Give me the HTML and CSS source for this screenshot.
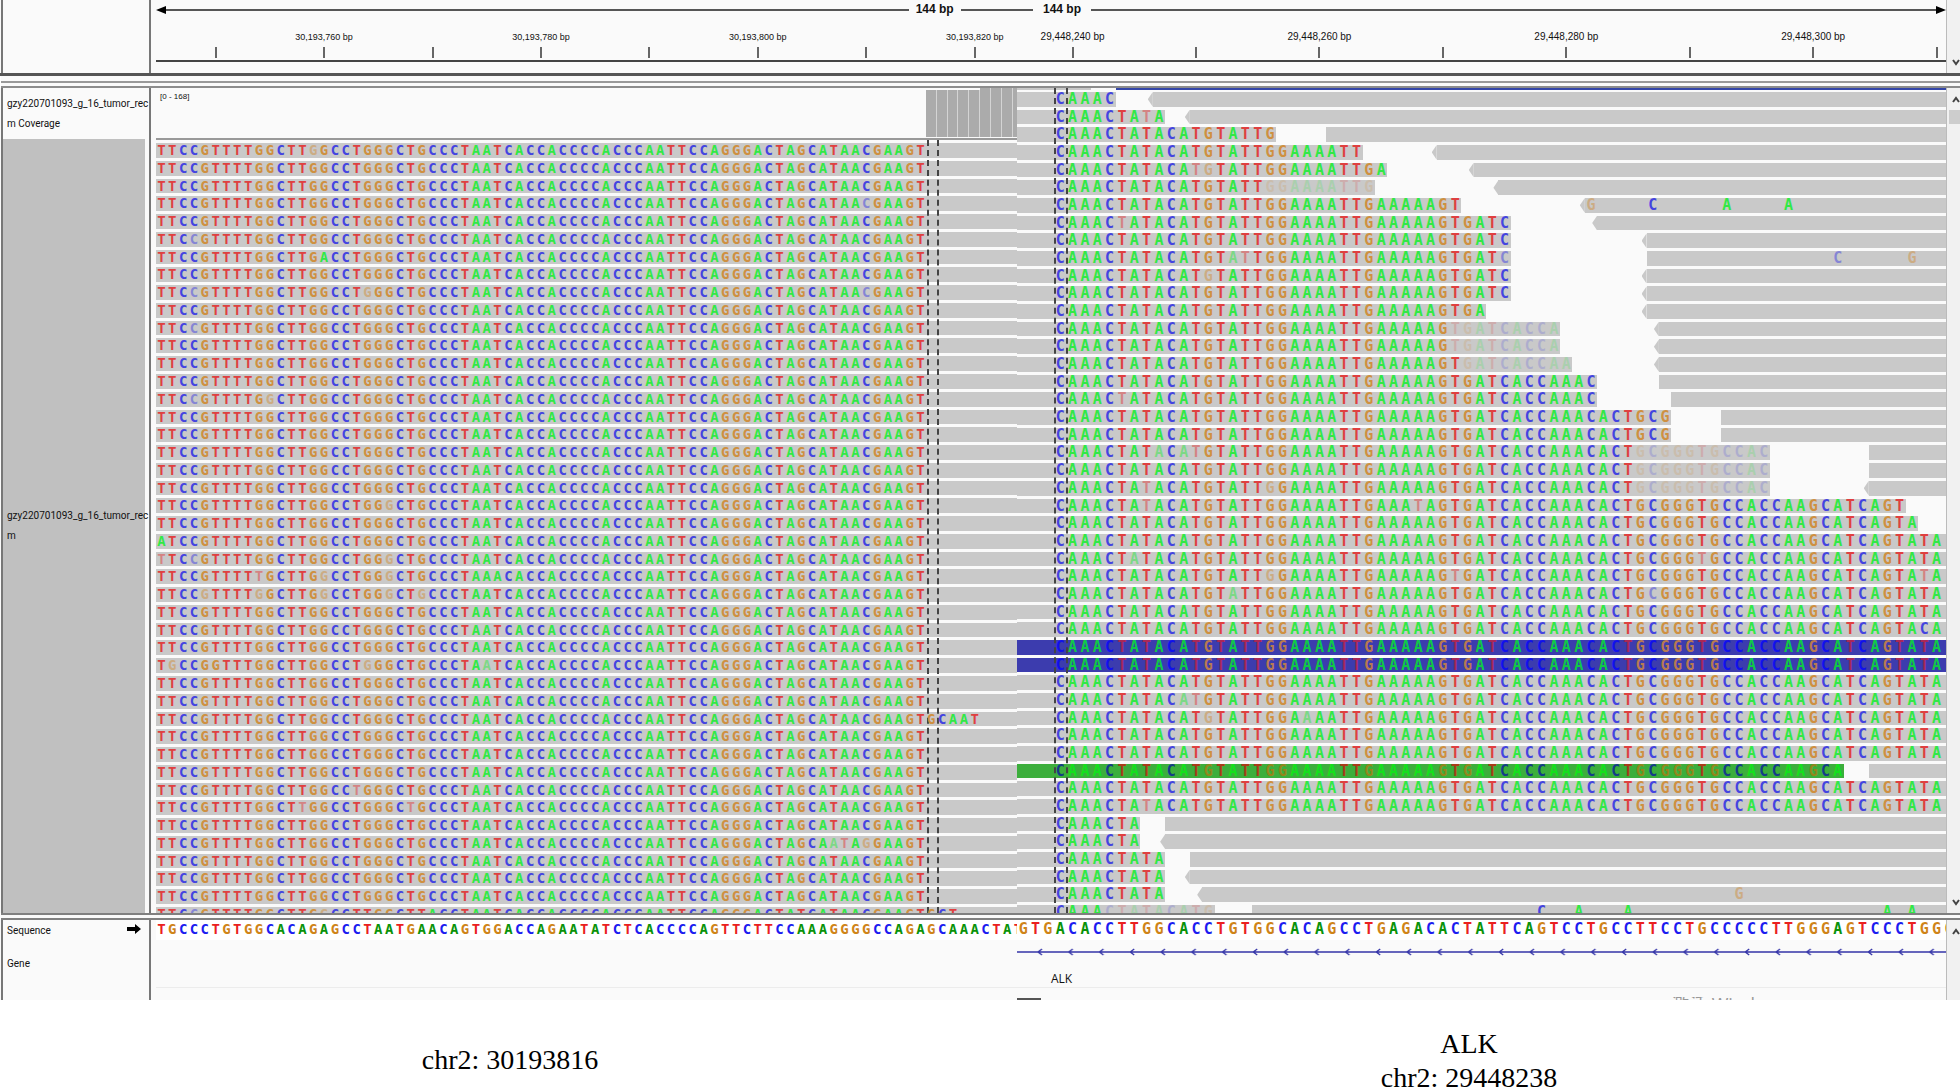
FILE: index.html
```html
<!DOCTYPE html>
<html lang="en">
<head>
<meta charset="utf-8">
<title>EML4–ALK read alignments</title>
<link rel="stylesheet" href="styles.css">
</head>
<body>
<main class="viewer">
  <section class="band ruler-band">
    <div class="names"></div>
    <div class="ruler locus-a">
      <div class="span">
        <svg class="head" viewBox="0 0 10 8"><path d="M0 4L10 0V8Z"/></svg>
        <span class="rule long"></span><b>144 bp</b><span class="rule short"></span>
      </div>
      <div class="ticks" data-first="5" data-label="30,193,760 30,193,780 30,193,800 30,193,820"></div>
    </div>
    <div class="ruler locus-b">
      <div class="span">
        <span class="rule lead"></span><b>144 bp</b><span class="rule long"></span>
        <svg class="head" viewBox="0 0 10 8"><path d="M10 4L0 0V8Z"/></svg>
      </div>
      <div class="ticks" data-first="4" data-label="29,448,240 29,448,260 29,448,280 29,448,300"></div>
    </div>
    <div class="scroll end">
      <button aria-label="Scroll down"><svg viewBox="0 0 8 7"><path d="M1 1L4 5L7 1"/></svg></button>
    </div>
  </section>

  <div class="splitter"></div>

  <section class="band reads-band">
    <div class="names">
      <div class="name coverage-name">gzy220701093_g_16_tumor_rec<br>m Coverage</div>
      <div class="name reads-name">gzy220701093_g_16_tumor_rec<br>m</div>
    </div>
    <div class="panel locus-a">
      <div class="coverage"><span class="scale">[0 - 168]</span></div>
      <div class="breakpoints-area">
        <div class="reads" id="reads-a"></div>
        <div class="mark" aria-hidden="true"></div>
      </div>
    </div>
    <div class="panel locus-b">
      <div class="breakpoints-area">
        <div class="strip"><i class="plain"></i><i class="blue"></i></div>
        <div class="reads" id="reads-b"></div>
        <div class="mark" aria-hidden="true"></div>
      </div>
    </div>
    <div class="scroll">
      <button aria-label="Scroll up"><svg viewBox="0 0 8 7"><path d="M1 6L4 2L7 6"/></svg></button>
      <div class="thumb"></div>
      <button class="last" aria-label="Scroll down"><svg viewBox="0 0 8 7"><path d="M1 1L4 5L7 1"/></svg></button>
    </div>
  </section>

  <div class="splitter low"></div>

  <section class="band gene-band">
    <div class="names">
      <div class="name seq-name">Sequence
        <svg viewBox="0 0 14 10"><path d="M0 3H8V0L14 5L8 10V7H0Z"/></svg>
      </div>
      <div class="name gene-name">Gene</div>
    </div>
    <div class="panel locus-a">
      <div class="sequence" data-seq="TGCCCTGTGGCACAGAGCCTAATGAACAGTGGACCAGAATATCTCACCCCAGTTCTTCCAAAGGGGCCAGAGCAAACTAT"></div>
      <div class="gene"></div>
      <div class="foot"></div>
    </div>
    <div class="panel locus-b">
      <div class="sequence" data-seq="GTGACACCTTGGCACCTGTGGCACAGCCTGAGACACTATTCAGTCCTGCCTTCCTGCCCCCTTGGGAGTCCCTGGG"></div>
      <div class="gene">
        <svg class="strand" width="100%" height="8">
          <defs><pattern id="dir" width="30.75" height="8" patternUnits="userSpaceOnUse">
            <path d="M0 4H31M25 1L21 4L25 7" fill="none" stroke="#3434a8" stroke-width="1.4"/>
          </pattern></defs>
          <rect width="100%" height="8" fill="url(#dir)"/>
        </svg>
        <span class="symbol">ALK</span>
      </div>
      <div class="foot"><i class="bar"></i><span class="notice">激活 Windows</span></div>
    </div>
    <div class="scroll">
      <button aria-label="Scroll up"><svg viewBox="0 0 8 7"><path d="M1 6L4 2L7 6"/></svg></button>
    </div>
  </section>
</main>
<footer class="captions">
  <p class="cap-a">chr2: 30193816</p>
  <p class="cap-b">ALK<br>chr2: 29448238</p>
</footer>
<script src="reads.js"></script>
</body>
</html>
```
FILE: styles.css
```css
* { box-sizing: border-box; }
body { margin: 0; background: #fff; color: #111; font-family: "Liberation Sans", Arial, sans-serif; }
p { margin: 0; }

.band { display: grid; grid-template-columns: 156px minmax(0, 861fr) minmax(0, 929fr) 14px; background: #fafafa; }
.locus-a { --cell: calc(100% / 79.3); --cols: 80; --letter: 14px; }
.locus-b { --cell: calc(100% / 75.2); --cols: 76; --letter: 15px; }
.panel, .ruler { min-width: 0; overflow: hidden; display: flex; flex-direction: column; }

.names { display: flex; flex-direction: column; margin: 0 5px 0 1px; border-left: 2px solid #777; border-right: 2px solid #777; }
.name { padding: 0 0 0 4px; font-family: Roboto, sans-serif; font-size: 10px; line-height: 20px; white-space: nowrap; }

/* Ruler */
.ruler-band { height: 76px; border-bottom: 3px solid #555; }
.span { display: flex; align-items: center; height: 19px; }
.span b { font-size: 12px; line-height: 19px; text-align: center; white-space: nowrap; width: 52px; }
.locus-b .span b { width: 58px; }
.rule { height: 2px; background: #555; }
.rule.long { flex: 752; }
.rule.short { flex: 57; }
.locus-b .rule.long { flex: 1; }
.rule.lead { width: 16px; }
.head { width: 10px; height: 8px; flex: none; }
.ticks { display: grid; grid-template-columns: repeat(var(--cols), var(--cell)); height: 43px; padding-top: 8px; border-bottom: 2px solid #444; }
.tick { grid-row: 1; display: flex; flex-direction: column; align-items: center; justify-content: space-between; font-size: 10px; line-height: 20px; white-space: nowrap; padding-bottom: 2px; }
.locus-a .tick { font-size: 9px; }
.tick::after { content: ""; width: 2px; height: 11px; background: #666; margin-top: auto; }

.splitter { height: 12px; margin-left: 1px; border-bottom: 2px solid #8c8c8c; background: linear-gradient(#999, #999) 0 5px / 100% 2px no-repeat #fafafa; }
.splitter.low { height: 7px; background: #fafafa; border-top: 2px solid #808080; border-bottom-color: #808080; }

/* Alignments */
.reads-band { min-height: 825px; }
.coverage-name { height: 51px; padding-top: 6px; }
.reads-name { flex: 1; margin-right: 4px; background: #c0c0c0; display: flex; align-items: center; }
.coverage { display: grid; grid-template-columns: repeat(var(--cols), var(--cell)); height: 52px; border-bottom: 2px solid #999; padding-bottom: 1px; }
.scale { grid-row: 1; grid-column: 1 / span 8; font-size: 8px; line-height: 18px; padding-left: 4px; }
.depth { grid-row: 1; background: #ababab; border-right: 1px solid #d4d4d4; }
.depth.less { margin-top: 2px; }
.breakpoints-area { flex: 1; position: relative; display: flex; flex-direction: column; }
.reads { flex: 1; display: grid; }
#reads-a { grid-template-rows: repeat(43, minmax(0, 1fr)) 6px; padding-top: 3px; }
#reads-b { grid-template-rows: repeat(46, minmax(0, 1fr)) 8px; }
.mark { position: absolute; top: 0; bottom: 0; border: dashed #444; border-width: 0 2px; }
.locus-a .mark { left: calc(var(--cell) * 71); width: calc(var(--cell) * 1.1); }
.locus-b .mark { left: calc(var(--cell) * 3); width: calc(var(--cell) * 1.1); }
.strip { height: 4px; display: grid; grid-template-columns: repeat(var(--cols), var(--cell)); }
.strip i { height: 2px; }
.strip .plain { grid-column: 1 / 7; background: #c9c9c9; }
.strip .blue { grid-column: 9 / -1; background: #3446a8; }

.read, .sequence { display: grid; grid-template-columns: repeat(var(--cols), var(--cell)); min-height: 0; overflow: hidden; }
.read { grid-template-rows: 100%; padding-bottom: 3px; }
.read.cut { padding-bottom: 0; }
.seg { grid-row: 1; background: #c9c9c9; }
.seg.rev { position: relative; }
.seg.rev::before { content: ""; position: absolute; top: 0; bottom: 0; left: -5px; width: 5px; background: inherit; clip-path: polygon(100% 0, 100% 100%, 0 50%); }
.nt { grid-row: 1; z-index: 1; text-align: center; font: bold var(--letter)/14px "DejaVu Sans Mono", monospace; }
.nt.A { color: #32e846; }
.nt.C { color: #4444e0; }
.nt.G { color: #cf9040; }
.nt.T { color: #df4040; }
.nt.low { opacity: .5; }
.nt.faint { opacity: .2; }
.fwd-blue .seg { background: #3c3cae; }
.fwd-blue .A { color: #10c848; }
.fwd-blue .C { color: #1010ee; }
.fwd-blue .G { color: #b87a50; }
.fwd-blue .T { color: #a82858; }
.green .seg { background: #3cae3c; }
.green .seg.rest { background: #c9c9c9; }
.green .A { color: #14e01c; }
.green .C { color: #143c88; }
.green .G { color: #93861c; }
.green .T { color: #a83c18; }

/* Reference sequence and gene */
.gene-band { height: 80px; }
.seq-name { display: flex; align-items: center; justify-content: space-between; padding-right: 8px; margin-top: 1px; }
.seq-name svg { width: 14px; height: 10px; margin-bottom: 4px; }
.gene-name { margin-top: 13px; }
.sequence { background: #fff; height: 20px; padding-top: 1px; }
.sequence .nt { line-height: 17px; }
.sequence .A { color: #0a930a; }
.sequence .C { color: #1c1cf0; }
.sequence .G { color: #cf8418; }
.sequence .T { color: #ea2020; }
.gene { height: 48px; padding-top: 8px; border-bottom: 1px solid #ececec; display: flex; flex-direction: column; }
.strand { display: block; }
.symbol { font: 12px/16px "Open Sans", sans-serif; margin: 15px 0 0 34px; }
.foot { height: 12px; display: flex; align-items: flex-end; overflow: hidden; }
.foot .bar { width: 24px; height: 2px; background: #555; }
.notice { height: 3px; overflow: hidden; margin-left: 630px; color: #999; font: 18px/14px "Open Sans", "Noto Sans CJK SC", sans-serif; white-space: nowrap; }

/* Scrollbars */
.scroll { background: #f1f1f1; border-left: 1px solid #bbb; display: flex; flex-direction: column; }
.scroll.end { justify-content: flex-end; }
.scroll button { border: 0; padding: 0 0 0 4px; height: 22px; background: none; display: flex; align-items: center; justify-content: center; }
.scroll svg { width: 8px; height: 7px; fill: none; stroke: #444; stroke-width: 2; }
.thumb { height: 14px; background: #cdcdcd; margin-left: 2px; }
.last { margin-top: auto; }

.captions { display: grid; grid-template-columns: 1020fr 898fr 42fr; padding-top: 27px; font: 28px/34px "Liberation Serif", "Times New Roman", serif; text-align: center; color: #000; }
.cap-a { padding-top: 16px; }
```
FILE: reads.js
```js
const LEFT = "TTCCGTTTTGGCTTGGCCTGGGCTGCCCTAATCACCACCCCACCCAATTCCAGGGACTAGCATAACGAAGT";
const RIGHT = "CAAACTATACATGTATTGGAAAATTGAAAAAGTGATCACCAAACACTGCGGGTGCCACCAAGCATCAGTATA";

function letter(row, col, base, tone) {
  const s = document.createElement("span");
  s.className = "nt " + base + (tone ? " " + tone : "");
  s.style.gridColumn = col + 1;
  s.textContent = base;
  row.append(s);
}
function segment(row, from, to, cls) {
  const s = document.createElement("i");
  s.className = "seg " + (cls || "");
  s.style.gridColumn = (from + 1) + " / " + (to < 0 ? -1 : to + 1);
  row.append(s);
}
function addRow(host, cls) {
  const r = document.createElement("div");
  r.className = "read " + (cls || "");
  host.append(r);
  return r;
}

/* Mismatches on the left locus: row -> column -> base; lower case is low quality */
const leftEdits = {
  0: {14: "g"}, 3: {65: "c"}, 5: {3: "c"}, 6: {15: "A"}, 8: {3: "c", 19: "g", 65: "c"},
  10: {3: "c"}, 14: {3: "c", 10: "g"}, 20: {21: "g"}, 22: {0: "A"}, 23: {0: "t", 3: "c", 21: "g"},
  24: {9: "t", 15: "g", 21: "g", 31: "A"}, 25: {4: "g", 9: "g", 15: "g", 21: "g", 24: "g"},
  29: {1: "g", 5: "G", 19: "g", 30: "a"}, 32: {71: "G", 72: "C", 73: "A", 74: "A", 75: "T"},
  36: {18: "t"}, 37: {13: "t", 23: "t"}, 39: {61: "A", 62: "a", 63: "t", 64: "A", 65: "g"},
  43: {3: "c", 15: "g", 19: "T", 24: "T", 25: "A", 59: "T", 71: "G", 72: "C", 73: "T"}
};
const a = document.getElementById("reads-a");
for (let i = 0; i < 44; i++) {
  const r = addRow(a, i === 43 ? "cut" : "");
  segment(r, 0, -1);
  const bases = [...LEFT];
  for (const c in leftEdits[i] || {}) bases[c] = leftEdits[i][c];
  bases.forEach((b, c) => letter(r, c, b.toUpperCase(), b > "Z" ? "low" : ""));
}

/* [clipped bases, start of the next read, reversed, first faint base] */
const spans = [
  [5,8,1],[9,11,1],[18,22],[25,31,1],[27,34,1],[26,36,1,17],[33,43,1],[37,44,1],[37,48,1],[37,48],
  [37,48,1],[37,48,1],[35,48,1],[41,49,1,32],[41,49,1,32],[42,49,1,33],[44,49],[44,50],[50,54],[50,54],
  [58,66,0,47],[58,66,0,47],[58,66,1,47],[69],[70],[72],[72],[72],[72],[72],
  [72],[72],[72],[72],[72],[72],[72],[72],[64,66],[72],
  [72],[7,9],[7,9,1],[9,11],[9,11,1],[9,12,1],[13,16,0,4]
];
const rightEdits = {
  1: {7: "t"}, 4: {11: "t", 12: "g"}, 6: {43: "g", 48: "C", 54: "A", 59: "A"}, 7: {5: "t"},
  9: {14: "a", 15: "t", 36: "c", 63: "c", 69: "g"}, 10: {12: "g"}, 17: {5: "t"}, 20: {8: "a", 10: "a", 11: "t"},
  22: {7: "t", 17: "g"}, 23: {7: "t", 29: "t"}, 26: {6: "a", 52: "t"}, 27: {17: "g", 32: "t", 70: "t"},
  28: {14: "a", 48: "c"}, 30: {70: "C"}, 34: {10: "a", 11: "t"}, 35: {12: "g", 20: "a"}, 40: {7: "t"},
  45: {55: "g"}, 46: {39: "C", 42: "A", 46: "A", 67: "A", 69: "A"}
};
const b = document.getElementById("reads-b");
spans.forEach(([n, next, rev, faint], i) => {
  const r = addRow(b, i === 46 ? "cut" : i === 31 || i === 32 ? "fwd-blue" : i === 38 ? "green" : "");
  segment(r, 0, n === 72 ? -1 : n + 3);
  if (next) segment(r, next + 3, -1, rev ? "rest rev" : "rest");
  const edits = rightEdits[i] || {};
  for (let c = 0; c < n; c++) {
    const x = edits[c] || RIGHT[c];
    letter(r, c + 3, x.toUpperCase(), c >= (faint || 99) ? "faint" : x > "Z" ? "low" : "");
  }
  for (const c in edits) if (c >= n) letter(r, +c + 3, edits[c].toUpperCase(), edits[c] > "Z" ? "low" : "");
});

document.querySelectorAll(".sequence").forEach(el =>
  [...el.dataset.seq].forEach((x, c) => letter(el, c, x)));

const cov = document.querySelector(".coverage");
for (let c = 71; c < 80; c++) {
  const d = document.createElement("i");
  d.className = "depth" + (c < 76 ? " less" : "");
  d.style.gridColumn = c + 1;
  cov.append(d);
}

/* A tick each 10 bases; every other one carries its coordinate */
document.querySelectorAll(".ticks").forEach(el => {
  const labels = el.dataset.label.split(" ");
  const first = +el.dataset.first;
  const labelled = first === 5 ? 15 : 4;
  for (let c = first; c < (first === 5 ? 79 : 76); c += 10) {
    const t = document.createElement("span");
    t.className = "tick";
    t.style.gridColumn = c + 1;
    if ((c - labelled) % 20 === 0 && c >= labelled) t.textContent = labels[(c - labelled) / 20] + " bp";
    el.append(t);
  }
});
```
